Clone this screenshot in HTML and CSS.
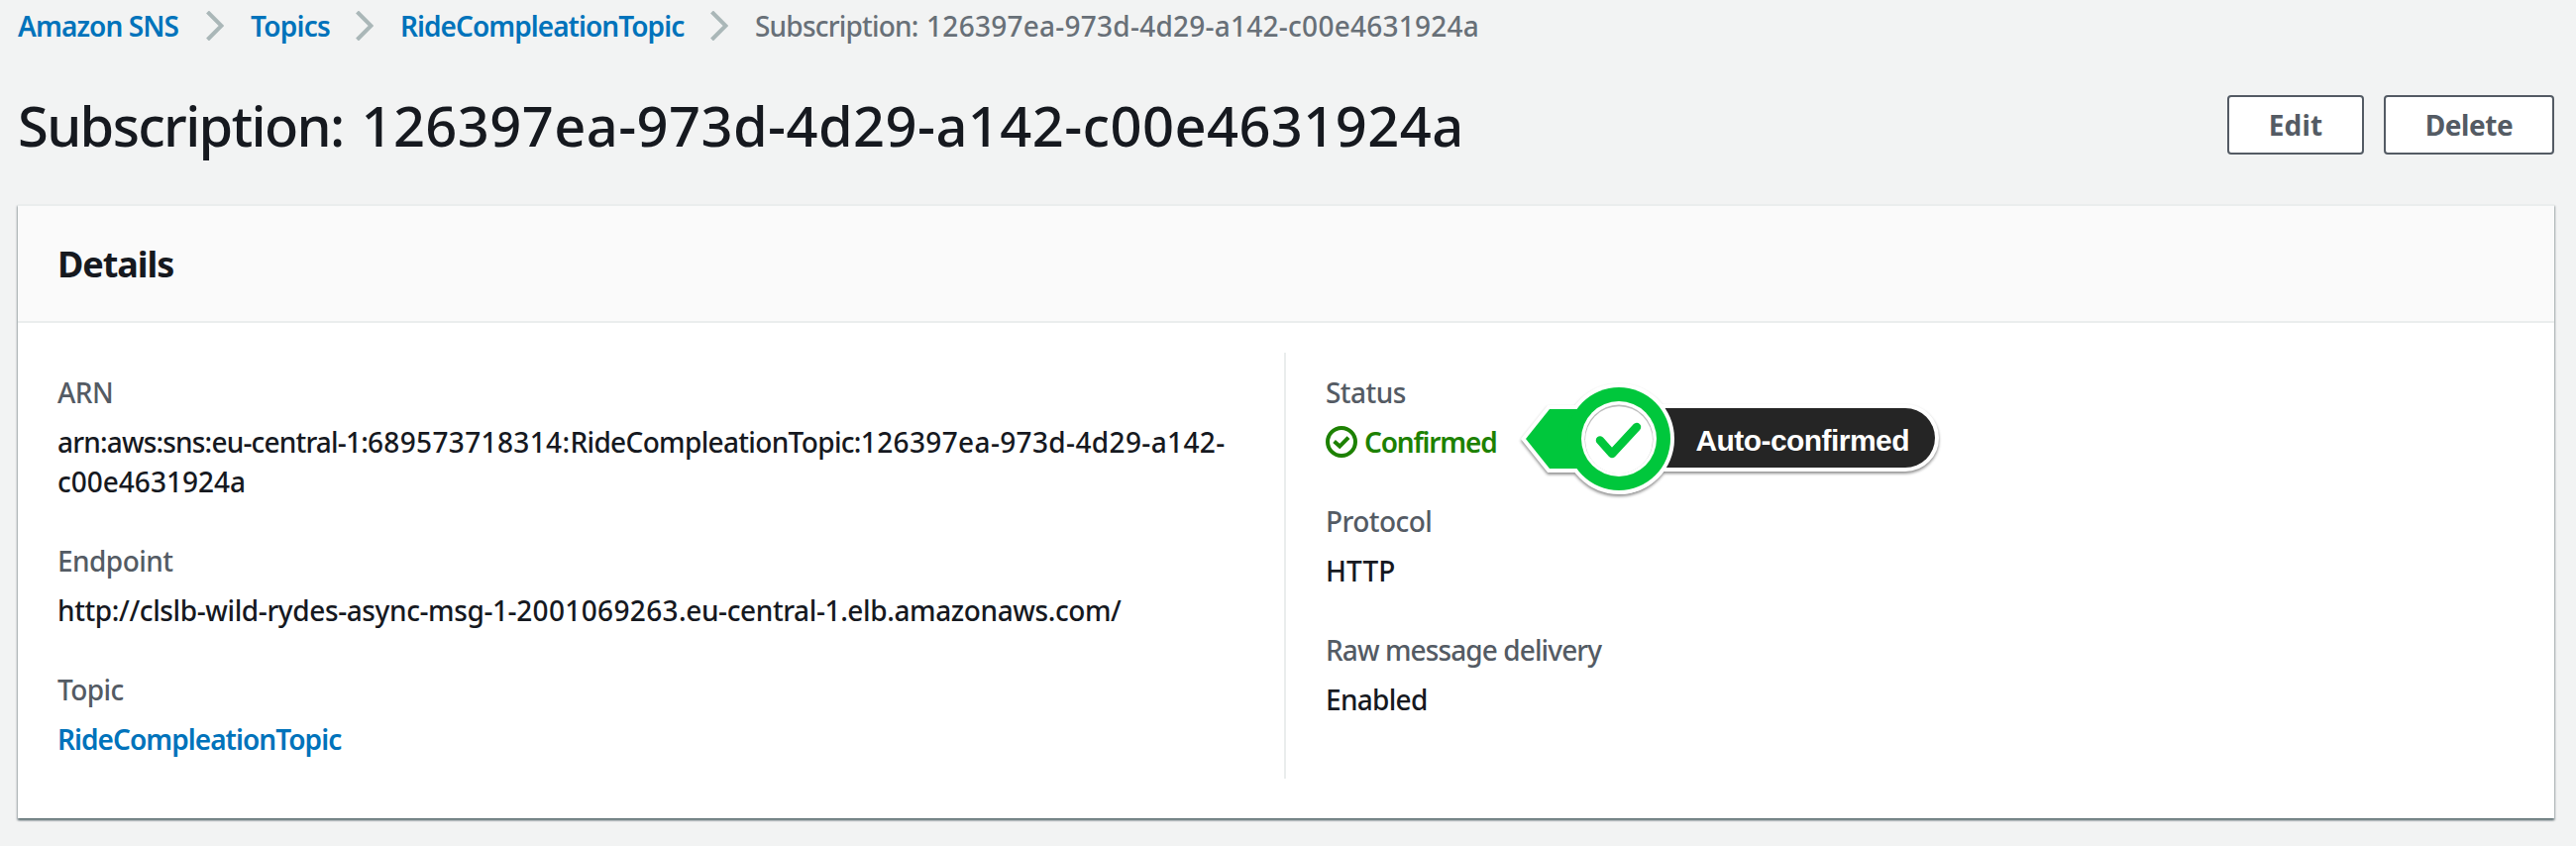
FILE: index.html
```html
<!DOCTYPE html>
<html lang="en">
<head>
<meta charset="utf-8">
<title>Amazon SNS</title>
<link rel="stylesheet" href="styles.css">
</head>
<body>
<nav class="crumbs">
  <a class="link crumb-root">Amazon SNS</a>
  <svg class="chevron" viewBox="0 0 18 30"><path d="M1.5 1 L15.5 15 L1.5 29"/></svg>
  <a class="link crumb-topics">Topics</a>
  <svg class="chevron" viewBox="0 0 18 30"><path d="M1.5 1 L15.5 15 L1.5 29"/></svg>
  <a class="link crumb-topic">RideCompleationTopic</a>
  <svg class="chevron" viewBox="0 0 18 30"><path d="M1.5 1 L15.5 15 L1.5 29"/></svg>
  <span class="crumb-current"><span class="crumb-word">Subscription: </span>126397ea-973d-4d29-a142-c00e4631924a</span>
</nav>
<header class="page-header">
  <h1 class="title"><span class="title-word">Subscription: </span>126397ea-973d-4d29-a142-c00e4631924a</h1>
  <div class="actions">
    <button class="btn btn-edit">Edit</button>
    <button class="btn btn-delete">Delete</button>
  </div>
</header>
<section class="card">
  <div class="card-header"><h2 class="card-title">Details</h2></div>
  <div class="card-body">
    <div class="column">
      <div class="field">
        <div class="label">ARN</div>
        <div class="value"><span class="arn-service">arn:aws:sns:eu-central-1:</span><span class="digits">689573718314:</span><span class="arn-topic">RideCompleationTopic:</span><span class="digits">126397ea-973d-4d29-a142-</span><br>c00e4631924a</div>
      </div>
      <div class="field">
        <div class="label">Endpoint</div>
        <div class="value value-url">http://clslb-wild-rydes-async-msg-1-<span class="digits">2001069263</span>.eu-central-1.elb.amazonaws.com/</div>
      </div>
      <div class="field">
        <div class="label">Topic</div>
        <div class="value"><a class="link crumb-topic">RideCompleationTopic</a></div>
      </div>
    </div>
    <div class="column column-right">
      <div class="field">
        <div class="label">Status</div>
        <div class="value status">
          <svg class="status-icon" viewBox="0 0 32 32"><circle cx="16" cy="16" r="14"/><path d="M8.6 15.6 L14.2 20.6 L23 11.6"/></svg>
          <span class="status-text">Confirmed</span>
        </div>
      </div>
      <div class="field">
        <div class="label">Protocol</div>
        <div class="value value-http">HTTP</div>
      </div>
      <div class="field">
        <div class="label label-raw">Raw message delivery</div>
        <div class="value value-enabled">Enabled</div>
      </div>
      <svg class="callout" viewBox="1520 380 460 130">
        <g class="callout-outline">
          <path d="M1634 412 H1923 a30 30 0 0 1 0 60 H1634 Z"/>
          <path d="M1540 443 L1564 413 H1634 V473 H1564 Z"/>
          <circle cx="1634" cy="443" r="52"/>
        </g>
        <path class="pill" d="M1634 412 H1923 a30 30 0 0 1 0 60 H1634 Z"/>
        <path class="white" d="M1634 387 a56 56 0 0 1 0 112 Z"/>
        <path class="green" d="M1540 443 L1564 413 H1634 V473 H1564 Z"/>
        <circle class="green" cx="1634" cy="443" r="52"/>
        <circle class="white" cx="1634" cy="443" r="38"/>
        <circle class="ring-shadow" cx="1634" cy="443.2" r="34.6"/>
        <circle class="white" cx="1634" cy="444.2" r="34"/>
        <path class="tick" d="M1615 444.5 L1627 458 L1652 431"/>
        <text class="callout-text" x="1711.5" y="455" textLength="216">Auto-confirmed</text>
      </svg>
    </div>
  </div>
</section>
</body>
</html>
```
FILE: styles.css
```css
* { box-sizing: border-box; }
body {
  margin: 0;
  padding: 6px 22px 28px 18px;
  background: #f2f3f3;
  color: #16191f;
  font: 500 28px/40px "Noto Sans", "Open Sans", sans-serif;
}
h1, h2 { margin: 0; }
.link { color: #0073bb; font-weight: 600; }
.crumbs { display: flex; height: 40px; white-space: nowrap; }
.crumb-root { width: 190px; letter-spacing: -0.9px; }
.crumb-topics { width: 106px; letter-spacing: -0.75px; }
.crumb-topic { letter-spacing: -0.95px; }
.crumbs .crumb-topic { width: 313px; }
.crumb-current { color: #687078; letter-spacing: 0.25px; }
.crumb-word { letter-spacing: -0.8px; word-spacing: 2px; }
.chevron {
  flex: none;
  width: 18px;
  height: 30px;
  margin: 5px 27px 0 0;
  fill: none;
  stroke: #aab7b8;
  stroke-width: 4;
}
.page-header {
  display: flex;
  justify-content: space-between;
  align-items: flex-start;
  margin-top: 43px;
}
.title { padding-top: 1px; font-size: 56px; line-height: 72px; font-weight: 500; letter-spacing: 0.42px; white-space: nowrap; }
.title-word { letter-spacing: -1.65px; word-spacing: 5px; }
.actions { display: flex; gap: 20px; padding-top: 7px; }
.btn {
  height: 60px;
  padding: 0;
  border: 2px solid #545b64;
  border-radius: 4px;
  background: #fff;
  color: #545b64;
  font: 700 28px/56px "Noto Sans", "Open Sans", sans-serif;
}
.btn-edit { width: 138px; letter-spacing: 0.1px; }
.btn-delete { width: 172px; letter-spacing: -0.4px; }
.card {
  height: 620px;
  margin-top: 44px;
  border-top: 2px solid #eaeded;
  background: #fff;
  box-shadow: 0 2px 2px 0 rgba(0, 28, 36, .42), 1px 2px 2px 0 rgba(0, 28, 36, .2), -1px 2px 2px 0 rgba(0, 28, 36, .2);
}
.card-header {
  height: 118px;
  padding: 37px 40px 35px;
  background: #fafafa;
  border-bottom: 2px solid #eaeded;
}
.card-title { font-size: 36px; line-height: 44px; font-weight: 700; letter-spacing: -1.05px; }
.card-body { display: grid; grid-template-columns: 1278px 1fr; padding: 30px 0 40px; }
.column { height: 430px; padding: 20px 0 20px 40px; display: flex; flex-direction: column; gap: 40px; }
.column-right { position: relative; border-left: 2px solid #eaeded; }
.field { display: flex; flex-direction: column; gap: 10px; white-space: nowrap; }
.label { color: #545b64; letter-spacing: -0.55px; }
.label-raw { letter-spacing: -0.9px; }
.arn-service { letter-spacing: -0.82px; }
.arn-topic { letter-spacing: -0.66px; }
.digits { letter-spacing: 0.36px; }
.value-url { letter-spacing: -0.39px; }
.value-http { letter-spacing: 0.1px; }
.value-enabled { letter-spacing: -0.7px; }
.status { display: flex; gap: 7px; color: #1d8102; font-weight: 600; }
.status-text { letter-spacing: -1.2px; }
.status-icon { width: 32px; height: 32px; margin-top: 4px; fill: none; stroke: #1d8102; stroke-width: 4; }
.callout { position: absolute; left: 222px; top: 24px; width: 460px; height: 130px; }
.callout-outline {
  fill: #fff;
  stroke: #fff;
  stroke-width: 8;
  filter: drop-shadow(0 2px 1.5px rgba(0, 0, 0, .45));
}
.pill { fill: #252525; }
.white { fill: #fff; }
.green { fill: #00c73c; }
.ring-shadow { fill: #bdbdbd; }
.tick { fill: none; stroke: #00c73c; stroke-width: 8.5; stroke-linecap: round; stroke-linejoin: round; }
.callout-text { font: 700 30px "Liberation Sans", Arial, sans-serif; fill: #fff; }
```
